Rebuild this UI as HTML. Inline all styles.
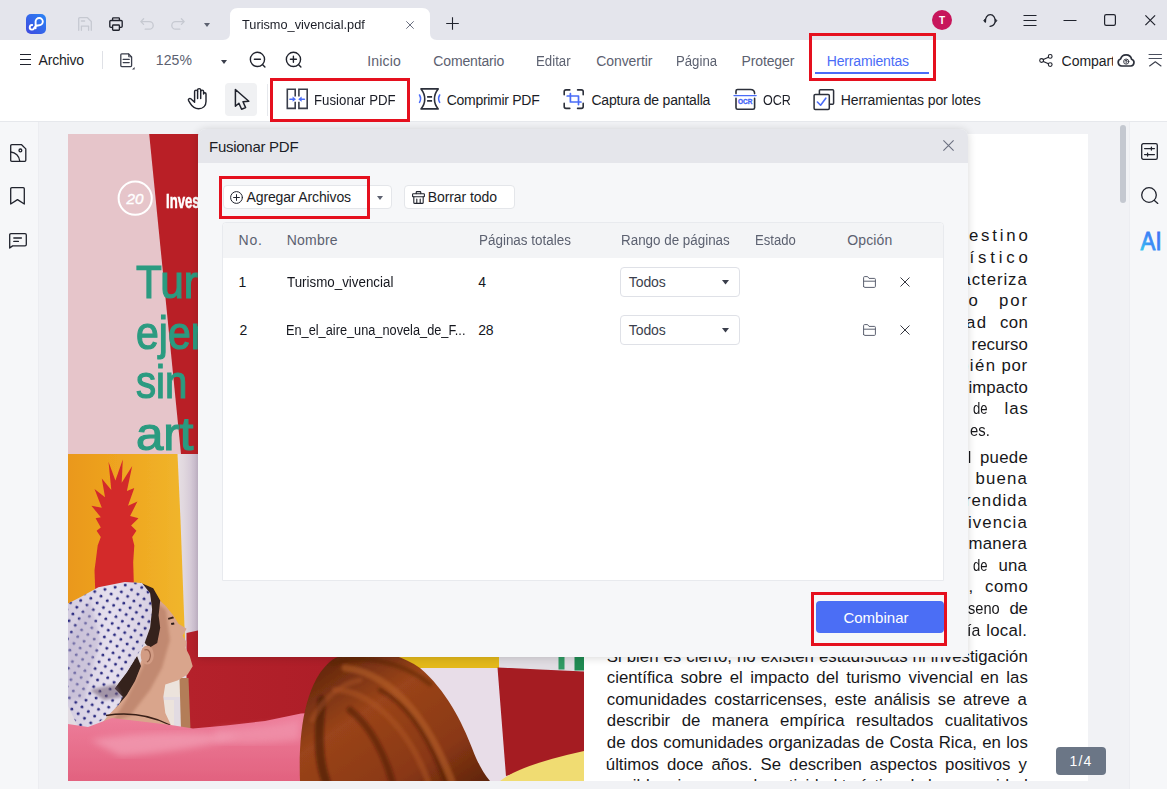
<!DOCTYPE html>
<html lang="es">
<head>
<meta charset="utf-8">
<title>Fusionar PDF</title>
<style>
*{box-sizing:border-box;margin:0;padding:0}
html,body{width:1167px;height:789px;overflow:hidden;background:#f1f2f5}
body{font-family:"Liberation Sans",sans-serif;color:#1b1d26;position:relative}
.abs{position:absolute}
.t{position:absolute;white-space:pre;line-height:1;font-size:14px}
svg{position:absolute;overflow:visible}
.ic{fill:none;stroke:#20232d;stroke-width:1.3;stroke-linecap:round;stroke-linejoin:round}
/* title bar */
#titlebar{left:0;top:0;width:1167px;height:40px;background:#e4e5ec}
#menubar{left:0;top:40px;width:1167px;height:81px;background:#fff}
#hr1{left:0;top:121px;width:1167px;height:1px;background:#e6e8ec}
.redbox{position:absolute;border:3px solid #e5101e}
/* work area */
#leftbar{left:0;top:122px;width:39px;height:667px;background:#f6f7f9;border-right:1px solid #ecedf1}
#rightbar{left:1129px;top:122px;width:38px;height:667px;background:#f6f7f9;border-left:1px solid #ecedf1}
#page{left:68px;top:134px;width:1020px;height:647px;background:#fff;overflow:hidden}
#scroll{left:1120px;top:125px;width:6px;height:78px;background:#c4c8d0;border-radius:3px}
#badge{left:1056px;top:747px;width:50px;height:28px;background:#6b7686;border-radius:4px}
/* dialog */
#dlg{left:198px;top:129.4px;width:770px;height:527.4px;background:#f6f7f9;border-radius:8px 8px 0 0;box-shadow:0 1px 9px rgba(0,0,0,.16)}
#dlghead{left:0;top:0;width:770px;height:33.4px;background:#e5e6eb;border-radius:8px 8px 0 0}
.btn{position:absolute;background:#fff;border:1px solid #e4e6ea;border-radius:4px}
#table{left:222px;top:222px;width:722px;height:359px;background:#fff;border:1px solid #e8eaee;border-radius:4px 4px 0 0}
#thead{left:223px;top:223px;width:720px;height:35px;background:#f3f4f6;border-radius:4px 4px 0 0}
.sel{position:absolute;width:120px;height:30px;background:#fff;border:1px solid #dfe1e7;border-radius:4px}
#combinar{left:816px;top:601px;width:128px;height:32px;background:#4b6ef5;border-radius:4px}
.doc{color:#17171a}
</style>
</head>
<body>

<!-- ================= TITLE BAR ================= -->
<div id="titlebar" class="abs"></div>
<svg style="left:222px;top:7px" width="220" height="33" viewBox="222 7 220 33">
  <path d="M223 40 Q230 40 230 33 L230 16 Q230 8 238 8 L422 8 Q430 8 430 16 L430 33 Q430 40 437 40 Z" fill="#fff"/>
</svg>
<!-- app logo -->
<svg style="left:26px;top:14px" width="20" height="20" viewBox="0 0 20 20">
  <defs><linearGradient id="lg" x1="1" y1="0" x2="0" y2="1"><stop offset="0" stop-color="#2a86f6"/><stop offset="1" stop-color="#3f48de"/></linearGradient></defs>
  <rect width="20" height="20" rx="5" fill="url(#lg)"/>
  <path d="M9.6 14.2 L9.6 7.6 A3.6 3.6 0 1 1 13.2 11.2 C10.5 11.2 9.2 12.2 8.3 13.7 A2.3 2.3 0 1 1 6.2 11" fill="none" stroke="#fff" stroke-width="1.9" stroke-linecap="round"/>
</svg>
<!-- save (disabled) -->
<svg style="left:78px;top:17px" width="14" height="14" viewBox="0 0 14 14" class="ic">
  <path d="M0.7 13.3 V1.8 Q0.7 0.7 1.8 0.7 H9.5 L13.3 4.5 V13.3" style="stroke:#c6c9d1"/>
  <path d="M3.4 13.3 V9.2 H10.6 V13.3 M3.4 4 H6.6" style="stroke:#c6c9d1"/>
</svg>
<!-- print -->
<svg style="left:109px;top:17px" width="14" height="14" viewBox="0 0 14 14" class="ic">
  <path d="M3.6 3.4 V1.6 Q3.6 0.8 4.4 0.8 H9.6 Q10.4 0.8 10.4 1.6 V3.4" stroke-width="1.35"/>
  <path d="M3.4 10.4 H1.9 Q0.8 10.4 0.8 9.3 V4.6 Q0.8 3.5 1.9 3.5 H12.1 Q13.2 3.5 13.2 4.6 V9.3 Q13.2 10.4 12.1 10.4 H10.6" stroke-width="1.35"/>
  <rect x="3.6" y="8" width="6.8" height="5.2" rx="0.8" stroke-width="1.35"/>
</svg>
<!-- undo / redo (disabled) -->
<svg style="left:140px;top:18px" width="14" height="12" viewBox="0 0 14 12" class="ic">
  <path d="M3.6 0.8 L0.8 3.6 L3.6 6.4 M0.8 3.6 H9.4 A3.8 3.8 0 0 1 9.4 11.2 H5.2" style="stroke:#c6c9d1"/>
</svg>
<svg style="left:171px;top:18px" width="14" height="12" viewBox="0 0 14 12" class="ic">
  <path d="M10.4 0.8 L13.2 3.6 L10.4 6.4 M13.2 3.6 H4.6 A3.8 3.8 0 0 0 4.6 11.2 H8.8" style="stroke:#c6c9d1"/>
</svg>
<svg style="left:204px;top:23px" width="6" height="4" viewBox="0 0 6 4"><path d="M0 0 H6 L3 4 Z" fill="#5c6170"/></svg>
<!-- tab close + plus -->
<svg style="left:406px;top:20.5px" width="8" height="8" viewBox="0 0 8 8"><path d="M0.3 0.3 L7.7 7.7 M7.7 0.3 L0.3 7.7" stroke="#6b7080" stroke-width="1" fill="none"/></svg>
<svg style="left:446px;top:17px" width="13" height="13" viewBox="0 0 13 13"><path d="M6.5 0.2 V12.8 M0.2 6.5 H12.8" stroke="#20232d" stroke-width="1.1" fill="none"/></svg>
<!-- avatar -->
<div class="abs" style="left:932px;top:10px;width:20px;height:20px;border-radius:50%;background:#c7165b"></div>
<!-- headset / support -->
<svg style="left:983px;top:13px" width="15" height="15" viewBox="983 13 15 15" class="ic">
  <path d="M985.5 21.8 A4.9 5.9 0 1 1 995.1 21.8 C994.6 24.4 992.8 26 990 26.3" stroke-width="1.25"/>
  <path d="M984.9 19.3 L983.7 20.7 L984.9 22.1 Z M995.7 19.3 L996.9 20.7 L995.7 22.1 Z" fill="#20232d" stroke-width="0.8"/>
</svg>
<!-- hamburger -->
<svg style="left:1023px;top:14px" width="14" height="12" viewBox="0 0 14 12"><path d="M0.5 1.5 H13.5 M0.5 6.5 H13.5 M0.5 11.5 H13.5" stroke="#20232d" stroke-width="1" fill="none"/></svg>
<!-- window controls -->
<svg style="left:1063px;top:20px" width="14" height="2" viewBox="0 0 14 2"><path d="M0.5 0.5 H13.5" stroke="#20232d" stroke-width="1"/></svg>
<svg style="left:1104px;top:14px" width="12" height="12" viewBox="0 0 12 12"><rect x="0.6" y="0.6" width="10.8" height="10.8" rx="1.6" fill="none" stroke="#20232d" stroke-width="1.2"/></svg>
<svg style="left:1145px;top:15px" width="10.5" height="10.5" viewBox="0 0 10.5 10.5"><path d="M0.4 0.4 L10.1 10.1 M10.1 0.4 L0.4 10.1" stroke="#20232d" stroke-width="1.2" fill="none"/></svg>

<!-- ================= MENU BAR ================= -->
<div id="menubar" class="abs"></div>
<div id="hr1" class="abs"></div>
<svg style="left:20px;top:54px" width="12" height="12" viewBox="0 0 12 12"><path d="M0 0.5 H11 M0 5.5 H11 M0 10.5 H11" stroke="#20232d" stroke-width="1" fill="none"/></svg>
<div class="abs" style="left:102px;top:51px;width:1px;height:18px;background:#dfe1e6"></div>
<!-- page-view icon -->
<svg style="left:120px;top:53px" width="15" height="17" viewBox="0 0 15 17" class="ic">
  <path d="M0.8 12.6 V1.8 Q0.8 0.8 1.8 0.8 H8.4 L11.6 4 V12.6 Q11.6 13.6 10.6 13.6 H1.8 Q0.8 13.6 0.8 12.6 Z" style="stroke:#3a3e4b;stroke-width:1.3"/>
  <path d="M8.6 1 V3.8 H11.4" style="stroke:#3a3e4b;stroke-width:0.9"/>
  <path d="M3.2 6.4 H9.2 M3.2 9.6 H9.2" style="stroke:#3a3e4b;stroke-width:1.3"/>
  <path d="M14.6 14 V16.6 H12 Z" fill="#3a3e4b" stroke="none"/>
</svg>
<svg style="left:221px;top:60px" width="6" height="4" viewBox="0 0 6 4"><path d="M0 0 H6 L3 3.9 Z" fill="#3a3e4b"/></svg>
<!-- zoom out / in -->
<svg style="left:249px;top:51px" width="18" height="18" viewBox="0 0 18 18" class="ic">
  <circle cx="8.45" cy="8.4" r="7.1" stroke-width="1.4"/><path d="M5.4 8.3 H11.4 M13.7 13.7 L15.9 15.9" stroke-width="1.4"/>
</svg>
<svg style="left:285.15px;top:51px" width="18" height="18" viewBox="0 0 18 18" class="ic">
  <circle cx="8.45" cy="8.4" r="7.1" stroke-width="1.4"/><path d="M5.4 8.3 H11.4 M8.4 5.3 V11.3 M13.7 13.7 L15.9 15.9" stroke-width="1.4"/>
</svg>
<!-- Herramientas underline -->
<div class="abs" style="left:815px;top:72px;width:114px;height:2px;background:#4a6cf7"></div>
<!-- share -->
<svg style="left:1039px;top:54px" width="14" height="13" viewBox="0 0 14 13" class="ic" >
  <circle cx="11.2" cy="2.4" r="1.9" stroke-width="1.1"/><circle cx="2.6" cy="6.5" r="1.9" stroke-width="1.1"/><circle cx="11.2" cy="10.6" r="1.9" stroke-width="1.1"/>
  <path d="M4.3 5.6 L9.5 3.2 M4.3 7.4 L9.5 9.8" stroke-width="1.1"/>
</svg>
<div class="abs" style="left:1061.6px;top:50px;width:51px;height:24px;overflow:hidden"><div class="t" style="left:0;top:4.1px;font-size:14px;letter-spacing:-.05px">Compartir</div></div>
<!-- cloud -->
<svg style="left:1116px;top:53px" width="20" height="15" viewBox="1116 53 20 15" class="ic">
  <path d="M1121.6 66 A3.6 3.6 0 0 1 1120.6 59 A5.7 5.7 0 0 1 1131.6 59.2 A3.5 3.5 0 0 1 1130.8 66 Z" stroke-width="1.7" style="stroke:#2c303b"/>
  <circle cx="1126.2" cy="61.6" r="2.6" stroke-width="0.9" style="stroke:#2c303b"/>
  <path d="M1126.2 63.2 V60.2 M1125 61.2 L1126.2 60 L1127.4 61.2" stroke-width="0.9" style="stroke:#2c303b"/>
</svg>
<!-- collapse -->
<svg style="left:1148px;top:53px" width="15" height="15" viewBox="1148 53 15 15" class="ic">
  <path d="M1149 54.5 H1161.5 M1149 58.5 H1161.5" stroke-width="1" style="stroke:#4a4f5e"/><path d="M1149.6 66 L1155.3 61.7 L1161 66" stroke-width="1.1" style="stroke:#3a3e4b"/>
</svg>

<!-- ================= TOOL BAR ================= -->
<!-- hand -->
<svg style="left:187px;top:87px" width="22" height="24" viewBox="187 87 22 24" class="ic">
  <path d="M194.6 101.4 V91.6 a1.5 1.5 0 0 1 3 0 V90.2 a1.55 1.55 0 0 1 3.1 0 V91.6 a1.45 1.45 0 0 1 2.9 0 V94 a1.2 1.2 0 0 1 2.4 0 V101.4 C206 106 202.8 108.7 198.6 108.7 C194.4 108.7 192.1 106.5 190.4 103.6 L188.6 100.6 C187.8 99.1 189.6 97.8 190.8 98.8 L194.6 102.3" stroke-width="1.45"/>
  <path d="M197.6 91.6 V98.4 M200.7 91.6 V98.4" stroke-width="1.45"/>
</svg>
<!-- select -->
<div class="abs" style="left:225px;top:83px;width:32px;height:33px;border-radius:4px;background:#f0f1f3"></div>
<svg style="left:234px;top:89px" width="16" height="22" viewBox="0 0 16 22" class="ic">
  <path d="M1.4 0.5 V17.2 L4.9 14.2 L7.6 20.3 L11.6 18.6 L9 12.8 L14.8 12.3 Z" stroke-width="1.5"/>
</svg>
<div class="abs" style="left:267px;top:84px;width:1px;height:32px;background:#e6e8ec"></div>
<!-- merge icon -->
<svg style="left:286px;top:88px" width="23" height="22" viewBox="286 88 23 22" class="ic" stroke-linejoin="miter">
  <path d="M295.2 96.6 V89.2 H287.3 V108.4 H295.2 V101.8 M298.9 96.6 V89.2 H307.2 V108.4 H298.9 V101.8" style="stroke:#3a3e4b;stroke-width:1.6;stroke-linejoin:miter;stroke-linecap:butt"/>
  <path d="M289.9 99.2 H293.4" style="stroke:#4a6cf7;stroke-width:1.6"/><path d="M292.6 96.6 L296 99.2 L292.6 101.8 Z" fill="#4a6cf7" stroke="none"/>
  <path d="M304.4 99.2 H300.8" style="stroke:#4a6cf7;stroke-width:1.6"/><path d="M301.6 96.6 L298.2 99.2 L301.6 101.8 Z" fill="#4a6cf7" stroke="none"/>
</svg>
<!-- compress icon -->
<svg style="left:418px;top:88px" width="23" height="22" viewBox="418 88 23 22" class="ic">
  <path d="M421 88.9 H438.2 C433.2 95 433.2 103 438.2 108.9 H421 C426 103 426 95 421 88.9 Z" style="stroke:#2c303b;stroke-width:1.6"/>
  <path d="M427.1 96.8 H432.1 M427.1 100.9 H432.1" style="stroke:#2c303b;stroke-width:1.8;stroke-linecap:butt"/>
  <path d="M419.5 95 C420.9 97.4 420.9 100 419.5 102.4 M439.7 95 C438.3 97.4 438.3 100 439.7 102.4" style="stroke:#4a6cf7;stroke-width:1.5"/>
</svg>
<!-- capture icon -->
<svg style="left:563px;top:89px" width="21" height="20" viewBox="0 0 21 20" class="ic">
  <path d="M1.2 5.8 V2.6 Q1.2 0.9 3 0.9 H6.8 M14.6 0.9 H18.4 Q20.2 0.9 20.2 2.6 V5.8 M20.2 14.4 V17.6 Q20.2 19.4 18.4 19.4 H14.6 M6.8 19.4 H3 Q1.2 19.4 1.2 17.6 V14.4" style="stroke:#2c303b;stroke-width:1.6"/>
  <path d="M7.4 4.6 V13 H18 M4.2 7 H15.5 V15.6" style="stroke:#4a6cf7;stroke-width:1.7"/>
</svg>
<!-- OCR icon -->
<svg style="left:733px;top:88px" width="24" height="23" viewBox="733 88 24 23" class="ic">
  <path d="M736 93.6 V91 Q736 89.5 737.6 89.5 H750.4 Q754.6 89.5 754.6 93.4 V93.6 M736 98.4 V107.8 Q736 109.3 737.6 109.3 H753 Q754.6 109.3 754.6 107.8 V98.4" style="stroke:#2c303b;stroke-width:1.6"/>
  <path d="M734 95.6 H756.2" style="stroke:#4a6cf7;stroke-width:1.3"/>
  <text x="745.2" y="104" text-anchor="middle" font-family="Liberation Sans, sans-serif" font-weight="700" font-size="6.6" fill="#3f63f6" stroke="#3f63f6" stroke-width="0.3" textLength="14.4" lengthAdjust="spacingAndGlyphs">OCR</text>
</svg>
<!-- batch icon -->
<svg style="left:813px;top:89px" width="22" height="22" viewBox="0 0 22 22" class="ic">
  <path d="M6.4 5.2 V1.8 Q6.4 0.8 7.4 0.8 H19.6 Q20.6 0.8 20.6 1.8 V14.2 Q20.6 15.2 19.6 15.2 H16.6" style="stroke:#2c303b;stroke-width:1.5"/>
  <rect x="1.1" y="5.4" width="15.2" height="15" rx="1.2" style="stroke:#2c303b;stroke-width:1.5"/>
  <path d="M4.4 13 L7.6 16.2 L12.8 9.2" style="stroke:#4a6cf7;stroke-width:1.6"/>
</svg>

<div class="t " style="left:242.30px;top:18px;font-size:13.5px;color:#1b1d26;transform:scaleX(0.9440);transform-origin:0 0;">Turismo_vivencial.pdf</div>
<div class="t " style="left:38.50px;top:53px;font-size:14px;color:#1b1d26;letter-spacing:-0.183px;">Archivo</div>
<div class="t " style="left:155.80px;top:53px;font-size:14px;color:#5c6170;letter-spacing:0.114px;">125%</div>
<div class="t " style="left:367.30px;top:54px;font-size:14px;color:#5c6170;letter-spacing:0.161px;">Inicio</div>
<div class="t " style="left:433.30px;top:54px;font-size:14px;color:#5c6170;letter-spacing:-0.153px;">Comentario</div>
<div class="t " style="left:536.45px;top:54px;font-size:14px;color:#5c6170;transform:scaleX(0.9468);transform-origin:0 0;">Editar</div>
<div class="t " style="left:596.20px;top:54px;font-size:14px;color:#5c6170;letter-spacing:-0.066px;">Convertir</div>
<div class="t " style="left:676.26px;top:54px;font-size:14px;color:#5c6170;transform:scaleX(0.9414);transform-origin:0 0;">Página</div>
<div class="t " style="left:741.50px;top:54px;font-size:14px;color:#5c6170;letter-spacing:-0.119px;">Proteger</div>
<div class="t " style="left:826.70px;top:54px;font-size:14px;color:#4a6cf7;letter-spacing:-0.148px;">Herramientas</div>
<div class="t " style="left:313.85px;top:93px;font-size:14px;color:#1b1d26;transform:scaleX(0.9457);transform-origin:0 0;">Fusionar PDF</div>
<div class="t " style="left:446.70px;top:93px;font-size:14px;color:#1b1d26;letter-spacing:-0.282px;">Comprimir PDF</div>
<div class="t " style="left:591.40px;top:93px;font-size:14px;color:#1b1d26;letter-spacing:-0.179px;">Captura de pantalla</div>
<div class="t " style="left:762.50px;top:93px;font-size:14px;color:#1b1d26;transform:scaleX(0.8968);transform-origin:0 0;">OCR</div>
<div class="t " style="left:840.70px;top:93px;font-size:14px;color:#1b1d26;letter-spacing:-0.072px;">Herramientas por lotes</div>
<div class="t " style="left:939.00px;top:16px;font-size:10px;color:#fff;font-weight:700;">T</div>
<div id="page" class="abs"></div>
<!-- ================= PDF PAGE : COVER ================= -->
<svg style="left:68px;top:134px" width="520" height="320" viewBox="68 134 520 320">
  <rect x="68" y="134" width="516" height="320" fill="#e6c5ca"/>
  <path d="M149.2 134 L584 134 L584 454 L181 454 Z" fill="#b91f26"/>
  <circle cx="135.2" cy="198.2" r="16.6" fill="none" stroke="#fff" stroke-width="2"/>
  <text x="135" y="204" text-anchor="middle" font-family="Liberation Sans, sans-serif" font-style="italic" font-size="15.5" fill="#fff" stroke="#fff" stroke-width="0.4" textLength="17" lengthAdjust="spacingAndGlyphs">20</text>
</svg>

<div class="t " style="left:136.38px;top:259px;font-size:46px;color:#2b9b80;transform:scaleX(0.9201);transform-origin:0 0;-webkit-text-stroke:1.2px #2b9b80;">Turismo vivencial:</div>
<div class="t " style="left:136.41px;top:310px;font-size:46px;color:#2b9b80;transform:scaleX(0.8911);transform-origin:0 0;-webkit-text-stroke:1.2px #2b9b80;">ejemplo de turismo</div>
<div class="t " style="left:136.43px;top:359px;font-size:46px;color:#2b9b80;transform:scaleX(0.8729);transform-origin:0 0;-webkit-text-stroke:1.2px #2b9b80;">sin necesidad de</div>
<div class="t " style="left:136.23px;top:411px;font-size:46px;color:#2b9b80;transform:scaleX(1.0699);transform-origin:0 0;-webkit-text-stroke:1.2px #2b9b80;">art</div>
<div class="t " style="left:165.83px;top:192px;font-size:19.8px;color:#fff;transform:scaleX(0.6661);transform-origin:0 0;font-weight:700;-webkit-text-stroke:0.5px #fff;">Investigación</div>
<!-- ================= PDF PAGE : PHOTO ================= -->
<svg style="left:68px;top:454px" width="516" height="327" viewBox="68 454 516 327">
  <defs>
    <clipPath id="pc"><rect x="68" y="454" width="516" height="327"/></clipPath>
    <linearGradient id="og" x1="0" y1="0" x2="1" y2="0"><stop offset="0" stop-color="#ea981c"/><stop offset=".55" stop-color="#efa821"/><stop offset="1" stop-color="#f0b62c"/></linearGradient>
    <linearGradient id="hg" x1="0" y1="0" x2="1" y2="1"><stop offset="0" stop-color="#4f1c08"/><stop offset=".4" stop-color="#9a441a"/><stop offset=".75" stop-color="#8a3814"/><stop offset="1" stop-color="#5e240c"/></linearGradient>
    <linearGradient id="sg" x1="0" y1="0" x2="1" y2="0"><stop offset="0" stop-color="#d4cde0"/><stop offset=".5" stop-color="#e6e0ee"/><stop offset="1" stop-color="#d8d0e2"/></linearGradient>
    <linearGradient id="pg" x1="0" y1="0" x2="0" y2="1"><stop offset="0" stop-color="#ee7f9c"/><stop offset="1" stop-color="#e2627f"/></linearGradient>
    <linearGradient id="wg" x1="0" y1="0" x2="1" y2="0"><stop offset="0" stop-color="#ebe5e8"/><stop offset=".45" stop-color="#e0d7de"/><stop offset="1" stop-color="#c9bbcf"/></linearGradient>
    <linearGradient id="rw" x1="0" y1="0" x2="1" y2="0"><stop offset="0" stop-color="#b5212b"/><stop offset="1" stop-color="#a91c26"/></linearGradient>
    <pattern id="dots" x="68" y="583" width="10.4" height="11.6" patternUnits="userSpaceOnUse" patternTransform="rotate(-12 100 650)">
      <circle cx="2.6" cy="2.9" r="1.5" fill="#2b2b80"/><circle cx="7.8" cy="8.7" r="1.5" fill="#2b2b80"/>
    </pattern>
    <filter id="b1"><feGaussianBlur stdDeviation="0.7"/></filter>
    <filter id="b2"><feGaussianBlur stdDeviation="1.8"/></filter>
    <filter id="b3"><feGaussianBlur stdDeviation="3.5"/></filter>
  </defs>
  <g clip-path="url(#pc)">
    <!-- wall -->
    <rect x="68" y="454" width="516" height="327" fill="#e2dbe2"/>
    <!-- orange painting -->
    <rect x="172" y="454" width="27" height="190" fill="url(#wg)"/>
    <path d="M68 454 H177.5 L180.5 520 L185 640 H68 Z" fill="url(#og)" filter="url(#b1)"/>
    <!-- pineapple -->
    <path filter="url(#b1)" fill="#d3292b" d="M95.6 600 L94.5 570.5 L97.7 545.4 L100.8 537 L96.6 530.8 L100.8 527.6 L95.6 518.2 L100.8 517.2 L91.4 505.7 L101.8 507.8 L94.5 488.9 L105 497.3 L101.8 478.5 L111.3 490 L108.5 461.7 L115.4 480.6 L122.8 459.6 L121.7 482.7 L132.2 465.9 L126.9 491 L134.3 487.9 L128 505.7 L137.4 501.5 L130.1 516.1 L138.5 518.2 L131.1 525.5 L136.4 530.8 L132.2 537 L134.3 545.4 L133.2 562.2 L134.3 600 Z"/>
    <!-- red wall -->
    <path d="M186.5 633 L200 630 H420 V735 H186.5 Z" fill="url(#rw)"/>
    <!-- paper + wooden strip near neck -->
    <path d="M164 680 H180 L180 697 H164 Z M164 700 H174 V727 H164 Z" fill="#ece3dc"/>
    <path d="M179.5 678 H188.5 L190.5 730 H181 Z" fill="#b37d58"/>
    <!-- face + neck -->
    <path filter="url(#b1)" d="M155 596 L165.3 605.4 L173.4 615.6 L178.5 623.7 L186.6 628.7 L182.6 635.8 L186.6 641.9 L185.6 648 L189.7 656.1 L192.7 666.2 L187.6 674.4 L177.5 680.4 L165.3 684.5 L163.3 696.7 L165.3 712.9 L171.4 726 L100 726 L120 700 L140 664 L150 640 Z" fill="#d9a58c"/>
    <path filter="url(#b2)" d="M158 604 L166 610 L170 640 L162 668 L150 690 L130 716 L112 722 L126 700 L142 668 L152 640 Z" fill="#b98068" opacity=".75"/>
    <path filter="url(#b1)" d="M168 618 l5 -1.4 l1 1.6 l-5.6 1.6 Z" fill="#3a2218"/>
    <path filter="url(#b1)" d="M171 623 l3 -.4 l.4 1.8 l-3 .6 Z" fill="#2a1a18"/>
    <!-- dark hair front -->
    <path filter="url(#b1)" d="M140 582.6 L153.2 588.2 L160.2 600.4 L158.6 615.6 L160.2 627.7 L157.2 643 L149.1 648 L144 642 L149.6 627.7 L151.6 609.5 L149.6 593.2 Z" fill="#35201a"/>
    <!-- ear -->
    <ellipse cx="147.2" cy="655" rx="6.6" ry="9.6" fill="#d29c84" filter="url(#b1)"/>
    <path d="M144.4 650 Q149.4 648 150.4 655 Q150.4 660 147 662" fill="none" stroke="#9a6450" stroke-width="1.2" filter="url(#b1)"/>
    <!-- hair behind neck -->
    <path filter="url(#b1)" d="M137 656 L141 666 L135 681 L126.8 695 L116.7 707 L100.4 715.5 L97.4 705 L114.6 688.5 L126.8 672.3 Z" fill="#35201a"/>
    <!-- head scarf -->
    <path id="scarf" filter="url(#b1)" d="M68 603.4 L80.2 597.3 L98.4 587.2 L124.8 582.1 L142 583.1 L150.1 593.2 L152.1 609.5 L150.1 627.7 L145 641.9 L138 654.1 L132.9 662.2 L126.8 672.3 L118.7 682.5 L114.6 688.5 L122.7 696.7 L118.7 704.8 L108.6 714.9 L92.3 727 L78.1 727 L68 706 Z" fill="url(#sg)"/>
    <path d="M68 603.4 L80.2 597.3 L98.4 587.2 L124.8 582.1 L142 583.1 L150.1 593.2 L152.1 609.5 L150.1 627.7 L145 641.9 L138 654.1 L132.9 662.2 L126.8 672.3 L118.7 682.5 L114.6 688.5 L122.7 696.7 L118.7 704.8 L108.6 714.9 L92.3 727 L78.1 727 L68 706 Z" fill="url(#dots)" filter="url(#b1)"/>
    <path filter="url(#b2)" d="M90 690 L116 684 L122 697 L104 700 Z" fill="#6e5a70" opacity=".55"/>
    <path filter="url(#b2)" d="M68 640 L90 600 L100 640 L84 700 L68 700 Z" fill="#bfb6d0" opacity=".5"/>
    <!-- necklace cord -->
    <path d="M106 715.5 Q140 710 170 725" fill="none" stroke="#3a2018" stroke-width="1.3"/>
    <!-- pink shirt -->
    <path filter="url(#b1)" d="M68 724 L88 727 L112 718 L171 725 L193 728.5 L226 725.5 L265 721 L301 713.5 L330 712 L330 781 L68 781 Z" fill="url(#pg)"/>
    <path filter="url(#b3)" d="M90 740 Q160 728 240 736 Q200 750 120 756 Z" fill="#f3a0b6" opacity=".7"/>
    <path filter="url(#b3)" d="M215 730 Q260 728 300 720 L300 740 Q250 746 215 742 Z" fill="#f29bb2" opacity=".6"/>
    <!-- yellow strip + white wall right -->
    <rect x="395" y="650" width="104" height="18.5" fill="#e3b81a"/>
    <path d="M420 668 H500 L506 781 H420 Z" fill="#e8dde8"/>
    <!-- top strip above red block -->
    <rect x="499" y="650" width="85" height="22" fill="#e0dce2"/>
    <rect x="558.5" y="650" width="6" height="19.5" fill="#2f9a63"/><rect x="574.5" y="650" width="9.5" height="20.5" fill="#1f8a52"/>
    <!-- red block -->
    <path filter="url(#b1)" d="M497.5 667.5 L540 669.5 L584 671.5 V753 L506 776 Z" fill="#a51a22"/>
    <!-- yellow shirt -->
    <path filter="url(#b1)" d="M500 781 Q520 765 584 751 V781 Z" fill="#f0dc72"/>
    <!-- brown hair (second person) -->
    <path filter="url(#b1)" d="M300 781 C298 730 306 680 332 660 C352 648 392 648 420 668 C446 690 462 722 472 748 C478 764 484 774 490 781 Z" fill="url(#hg)"/>
    <g filter="url(#b2)" fill="none" stroke-linecap="round">
      <path d="M345 668 C380 672 420 700 452 781" stroke="#b8602c" stroke-width="7" opacity=".55"/>
      <path d="M335 690 C365 690 405 720 428 781" stroke="#b05626" stroke-width="6" opacity=".5"/>
      <path d="M322 700 C318 730 318 760 326 781" stroke="#3a1204" stroke-width="9" opacity=".55"/>
      <path d="M350 710 C370 725 385 755 392 781" stroke="#451806" stroke-width="7" opacity=".5"/>
      <path d="M380 690 C410 705 430 740 445 781" stroke="#4a1a08" stroke-width="5" opacity=".45"/>
      <path d="M332 664 C360 654 400 660 430 684" stroke="#5a2008" stroke-width="5" opacity=".5"/>
      <path d="M312 720 C322 700 340 684 360 680" stroke="#a8521f" stroke-width="5" opacity=".5"/>
    </g>
  </g>
</svg>

<div class="abs" style="left:600px;top:134px;width:488px;height:647px;overflow:hidden"><div class="abs" style="left:-600px;top:-134px">
<div class="t doc" style="left:969.00px;top:228px;font-size:16.8px;color:#17171a;letter-spacing:2.791px;">estino</div>
<div class="t doc" style="left:969.50px;top:250px;font-size:16.8px;color:#17171a;letter-spacing:3.813px;">ístico</div>
<div class="t doc" style="left:961.50px;top:272px;font-size:16.8px;color:#17171a;letter-spacing:0.925px;">acteriza</div>
<div class="t doc" style="left:968.50px;top:293px;font-size:16.8px;color:#17171a;">o</div>
<div class="t doc" style="left:999.00px;top:293px;font-size:16.8px;color:#17171a;letter-spacing:1.867px;">por</div>
<div class="t doc" style="left:966.00px;top:315px;font-size:16.8px;color:#17171a;letter-spacing:1.367px;">ad</div>
<div class="t doc" style="left:1000.00px;top:315px;font-size:16.8px;color:#17171a;letter-spacing:0.338px;">con</div>
<div class="t doc" style="left:971.60px;top:337px;font-size:16.8px;color:#17171a;letter-spacing:0.029px;">recurso</div>
<div class="t doc" style="left:959.00px;top:358px;font-size:16.8px;color:#17171a;letter-spacing:1.469px;">bién</div>
<div class="t doc" style="left:1001.40px;top:358px;font-size:16.8px;color:#17171a;letter-spacing:0.667px;">por</div>
<div class="t doc" style="left:968.50px;top:380px;font-size:16.8px;color:#17171a;letter-spacing:0.079px;">impacto</div>
<div class="t doc" style="left:972.90px;top:401px;font-size:16.8px;color:#17171a;transform:scaleX(0.7800);transform-origin:0 0;">de</div>
<div class="t doc" style="left:1004.50px;top:401px;font-size:16.8px;color:#17171a;letter-spacing:0.919px;">las</div>
<div class="t doc" style="left:969.50px;top:423px;font-size:16.8px;color:#17171a;transform:scaleX(0.8838);transform-origin:0 0;">es.</div>
<div class="t doc" style="left:960.00px;top:450px;font-size:16.8px;color:#17171a;transform:scaleX(0.8514);transform-origin:0 0;">al</div>
<div class="t doc" style="left:980.00px;top:450px;font-size:16.8px;color:#17171a;letter-spacing:0.267px;">puede</div>
<div class="t doc" style="left:975.50px;top:471px;font-size:16.8px;color:#17171a;letter-spacing:1.142px;">buena</div>
<div class="t doc" style="left:965.00px;top:493px;font-size:16.8px;color:#17171a;letter-spacing:0.959px;">rendida</div>
<div class="t doc" style="left:967.90px;top:515px;font-size:16.8px;color:#17171a;letter-spacing:1.099px;">ivencia</div>
<div class="t doc" style="left:968.50px;top:536px;font-size:16.8px;color:#17171a;letter-spacing:0.267px;">manera</div>
<div class="t doc" style="left:972.90px;top:558px;font-size:16.8px;color:#17171a;transform:scaleX(0.7800);transform-origin:0 0;">de</div>
<div class="t doc" style="left:998.40px;top:558px;font-size:16.8px;color:#17171a;letter-spacing:0.167px;">una</div>
<div class="t doc" style="left:968.50px;top:579px;font-size:16.8px;color:#17171a;">,</div>
<div class="t doc" style="left:985.00px;top:579px;font-size:16.8px;color:#17171a;letter-spacing:0.566px;">como</div>
<div class="t doc" style="left:968.00px;top:601px;font-size:16.8px;color:#17171a;transform:scaleX(0.8709);transform-origin:0 0;">seno</div>
<div class="t doc" style="left:1009.40px;top:601px;font-size:16.8px;color:#17171a;letter-spacing:-0.333px;">de</div>
<div class="t doc" style="left:967.05px;top:623px;font-size:16.8px;color:#17171a;transform:scaleX(0.9515);transform-origin:0 0;">ía</div>
<div class="t doc" style="left:986.20px;top:623px;font-size:16.8px;color:#17171a;letter-spacing:0.297px;">local.</div>
<div class="t doc" style="left:606.80px;top:649px;font-size:16.8px;color:#17171a;word-spacing:0.380px;">Si bien es cierto, no existen estadísticas ni investigación</div>
<div class="t doc" style="left:606.80px;top:670px;font-size:16.8px;color:#17171a;word-spacing:2.724px;">científica sobre el impacto del turismo vivencial en las</div>
<div class="t doc" style="left:606.80px;top:692px;font-size:16.8px;color:#17171a;word-spacing:2.985px;">comunidades costarricenses, este análisis se atreve a</div>
<div class="t doc" style="left:606.80px;top:713px;font-size:16.8px;color:#17171a;word-spacing:6.783px;">describir de manera empírica resultados cualitativos</div>
<div class="t doc" style="left:606.80px;top:735px;font-size:16.8px;color:#17171a;word-spacing:0.733px;">de dos comunidades organizadas de Costa Rica, en los</div>
<div class="t doc" style="left:605.80px;top:757px;font-size:16.8px;color:#17171a;word-spacing:3.375px;">últimos doce años. Se describen aspectos positivos y</div>
<div class="t doc" style="left:605.80px;top:778px;font-size:16.8px;color:#17171a;word-spacing:-0.196px;">posibles riesgos en la actividad turística de la comunidad</div>
</div></div>
<!-- ================= SIDEBARS ================= -->
<div id="leftbar" class="abs"></div>
<div id="rightbar" class="abs"></div>
<div id="scroll" class="abs"></div>
<!-- left icons -->
<svg style="left:10px;top:144px" width="17" height="18" viewBox="0 0 17 18" class="ic">
  <path d="M0.7 16.2 V1.8 Q0.7 0.7 1.8 0.7 H11.6 L15.8 4.9 V16.2 Q15.8 17.3 14.7 17.3 H1.8 Q0.7 17.3 0.7 16.2 Z"/>
  <circle cx="10.4" cy="6.4" r="1.4"/>
  <path d="M0.7 8 C5.4 8.4 9.4 12 9.8 17.3"/>
</svg>
<svg style="left:10px;top:187px" width="15" height="18" viewBox="0 0 15 18" class="ic">
  <path d="M0.7 17 V1.8 Q0.7 0.7 1.8 0.7 H13.2 Q14.3 0.7 14.3 1.8 V17 L7.5 12.6 Z"/>
</svg>
<svg style="left:9px;top:233px" width="18" height="16" viewBox="0 0 18 16" class="ic">
  <path d="M0.7 15 V2 Q0.7 0.7 2 0.7 H16 Q17.3 0.7 17.3 2 V11.6 Q17.3 12.9 16 12.9 H3.6 Z"/>
  <path d="M4.8 5 H12.4 M4.8 8.4 H9.4"/>
</svg>
<!-- right icons -->
<svg style="left:1141px;top:143px" width="17" height="17" viewBox="0 0 17 17" class="ic">
  <rect x="0.7" y="0.7" width="15.6" height="15.6" rx="1.6"/>
  <path d="M3.6 5.6 H13.4 M3.6 11.6 H13.4 M10.4 4.2 V7 M6.6 10.2 V13"/>
</svg>
<svg style="left:1141px;top:187px" width="18" height="18" viewBox="0 0 18 18" class="ic">
  <circle cx="8" cy="8" r="7.3"/><path d="M13.4 13.4 L16.8 16.4"/>
</svg>
<svg style="left:1139.8px;top:230px" width="24" height="22" viewBox="0 0 24 22">
  <defs><linearGradient id="aig" x1="0" y1="1" x2="1" y2="0"><stop offset="0" stop-color="#36d6ee"/><stop offset=".5" stop-color="#3b86f6"/><stop offset="1" stop-color="#3f6cf6"/></linearGradient></defs>
  <text x="0.6" y="20.2" font-family="Liberation Sans, sans-serif" font-size="25.8" fill="url(#aig)" stroke="url(#aig)" stroke-width="0.9" textLength="21" lengthAdjust="spacingAndGlyphs">AI</text>
</svg>
<div id="badge" class="abs"></div>

<div class="t " style="left:1069.50px;top:754px;font-size:14px;color:#fff;letter-spacing:1.212px;">1/4</div>
<!-- ================= DIALOG ================= -->
<div id="dlg" class="abs"><div id="dlghead" class="abs"></div></div>
<svg style="left:942.5px;top:139.9px" width="11" height="11" viewBox="0 0 11 11"><path d="M0.4 0.4 L10.6 10.6 M10.6 0.4 L0.4 10.6" stroke="#6b7080" stroke-width="1.1" fill="none"/></svg>
<div class="btn" style="left:223px;top:185px;width:169px;height:24px"></div>
<svg style="left:230px;top:191px" width="13" height="13" viewBox="0 0 13 13" class="ic"><circle cx="6.5" cy="6.5" r="5.9" stroke-width="1"/><path d="M6.5 3.6 V9.4 M3.6 6.5 H9.4" stroke-width="1"/></svg>
<svg style="left:377px;top:196px" width="6" height="4" viewBox="0 0 6 4"><path d="M0 0 H6 L3 4 Z" fill="#5c6170"/></svg>
<div class="btn" style="left:404px;top:185px;width:111px;height:24px"></div>
<svg style="left:412px;top:191px" width="13" height="13" viewBox="0 0 13 13" class="ic">
  <path d="M4.2 2.6 V1.4 Q4.2 0.6 5 0.6 H8 Q8.8 0.6 8.8 1.4 V2.6" stroke-width="1.1"/>
  <rect x="0.6" y="2.8" width="11.8" height="3" rx="0.6" stroke-width="1.1"/>
  <path d="M1.8 5.8 V11.4 Q1.8 12.4 2.8 12.4 H10.2 Q11.2 12.4 11.2 11.4 V5.8 M4.8 8 V12.2 M8.2 8 V12.2" stroke-width="1.1"/>
</svg>
<div id="table" class="abs"></div>
<div id="thead" class="abs"></div>
<div class="sel" style="left:620px;top:267px"></div>
<div class="sel" style="left:620px;top:315px"></div>
<svg style="left:722px;top:279.5px" width="7" height="4.5" viewBox="0 0 7 4.5"><path d="M0 0 H7 L3.5 4.5 Z" fill="#3a3e4b"/></svg>
<svg style="left:722px;top:327.5px" width="7" height="4.5" viewBox="0 0 7 4.5"><path d="M0 0 H7 L3.5 4.5 Z" fill="#3a3e4b"/></svg>
<!-- folder + remove icons -->
<svg style="left:863px;top:276px" width="13" height="12" viewBox="0 0 13 12" class="ic"><path d="M0.6 10.4 V1.6 Q0.6 0.6 1.6 0.6 H4.6 L6 2.4 H11.4 Q12.4 2.4 12.4 3.4 V10.4 Q12.4 11.4 11.4 11.4 H1.6 Q0.6 11.4 0.6 10.4 Z M0.6 5.2 H12.4" style="stroke:#5c6170;stroke-width:1"/></svg>
<svg style="left:900px;top:277px" width="10" height="10" viewBox="0 0 10 10"><path d="M0.5 0.5 L9.5 9.5 M9.5 0.5 L0.5 9.5" stroke="#20232d" stroke-width="0.9" fill="none"/></svg>
<svg style="left:863px;top:324px" width="13" height="12" viewBox="0 0 13 12" class="ic"><path d="M0.6 10.4 V1.6 Q0.6 0.6 1.6 0.6 H4.6 L6 2.4 H11.4 Q12.4 2.4 12.4 3.4 V10.4 Q12.4 11.4 11.4 11.4 H1.6 Q0.6 11.4 0.6 10.4 Z M0.6 5.2 H12.4" style="stroke:#5c6170;stroke-width:1"/></svg>
<svg style="left:900px;top:325px" width="10" height="10" viewBox="0 0 10 10"><path d="M0.5 0.5 L9.5 9.5 M9.5 0.5 L0.5 9.5" stroke="#20232d" stroke-width="0.9" fill="none"/></svg>
<div id="combinar" class="abs"></div>

<div class="t " style="left:209.00px;top:139px;font-size:15px;color:#1b1d26;letter-spacing:-0.269px;">Fusionar PDF</div>
<div class="t " style="left:246.60px;top:190px;font-size:14px;color:#1b1d26;letter-spacing:-0.145px;">Agregar Archivos</div>
<div class="t " style="left:427.70px;top:190px;font-size:14px;color:#1b1d26;letter-spacing:-0.075px;">Borrar todo</div>
<div class="t " style="left:238.60px;top:233px;font-size:14px;color:#5c6170;letter-spacing:0.752px;">No.</div>
<div class="t " style="left:286.70px;top:233px;font-size:14px;color:#5c6170;letter-spacing:0.219px;">Nombre</div>
<div class="t " style="left:478.64px;top:233px;font-size:14px;color:#5c6170;transform:scaleX(0.9596);transform-origin:0 0;">Páginas totales</div>
<div class="t " style="left:620.54px;top:233px;font-size:14px;color:#5c6170;transform:scaleX(0.9570);transform-origin:0 0;">Rango de páginas</div>
<div class="t " style="left:754.57px;top:233px;font-size:14px;color:#5c6170;transform:scaleX(0.9346);transform-origin:0 0;">Estado</div>
<div class="t " style="left:847.20px;top:233px;font-size:14px;color:#5c6170;letter-spacing:0.146px;">Opción</div>
<div class="t " style="left:238.50px;top:275px;font-size:14px;color:#14161d;">1</div>
<div class="t " style="left:286.80px;top:275px;font-size:14px;color:#14161d;transform:scaleX(0.9542);transform-origin:0 0;">Turismo_vivencial</div>
<div class="t " style="left:478.20px;top:275px;font-size:14px;color:#14161d;">4</div>
<div class="t " style="left:239.50px;top:323px;font-size:14px;color:#14161d;">2</div>
<div class="t " style="left:285.89px;top:323px;font-size:14px;color:#14161d;transform:scaleX(0.9111);transform-origin:0 0;">En_el_aire_una_novela_de_F...</div>
<div class="t " style="left:478.20px;top:323px;font-size:14px;color:#14161d;letter-spacing:-0.286px;">28</div>
<div class="t " style="left:628.80px;top:275px;font-size:14px;color:#3b3f4d;letter-spacing:-0.090px;">Todos</div>
<div class="t " style="left:628.80px;top:323px;font-size:14px;color:#3b3f4d;letter-spacing:-0.090px;">Todos</div>
<div class="t " style="left:843.40px;top:610px;font-size:15px;color:#fff;letter-spacing:0.010px;">Combinar</div>
<!-- ================= RED ANNOTATION BOXES ================= -->
<div class="redbox" style="left:809px;top:33px;width:127px;height:48px"></div>
<div class="redbox" style="left:270px;top:78px;width:140px;height:44px"></div>
<div class="redbox" style="left:219px;top:176px;width:151px;height:43px"></div>
<div class="redbox" style="left:811px;top:592px;width:136px;height:54px"></div>

</body>
</html>
